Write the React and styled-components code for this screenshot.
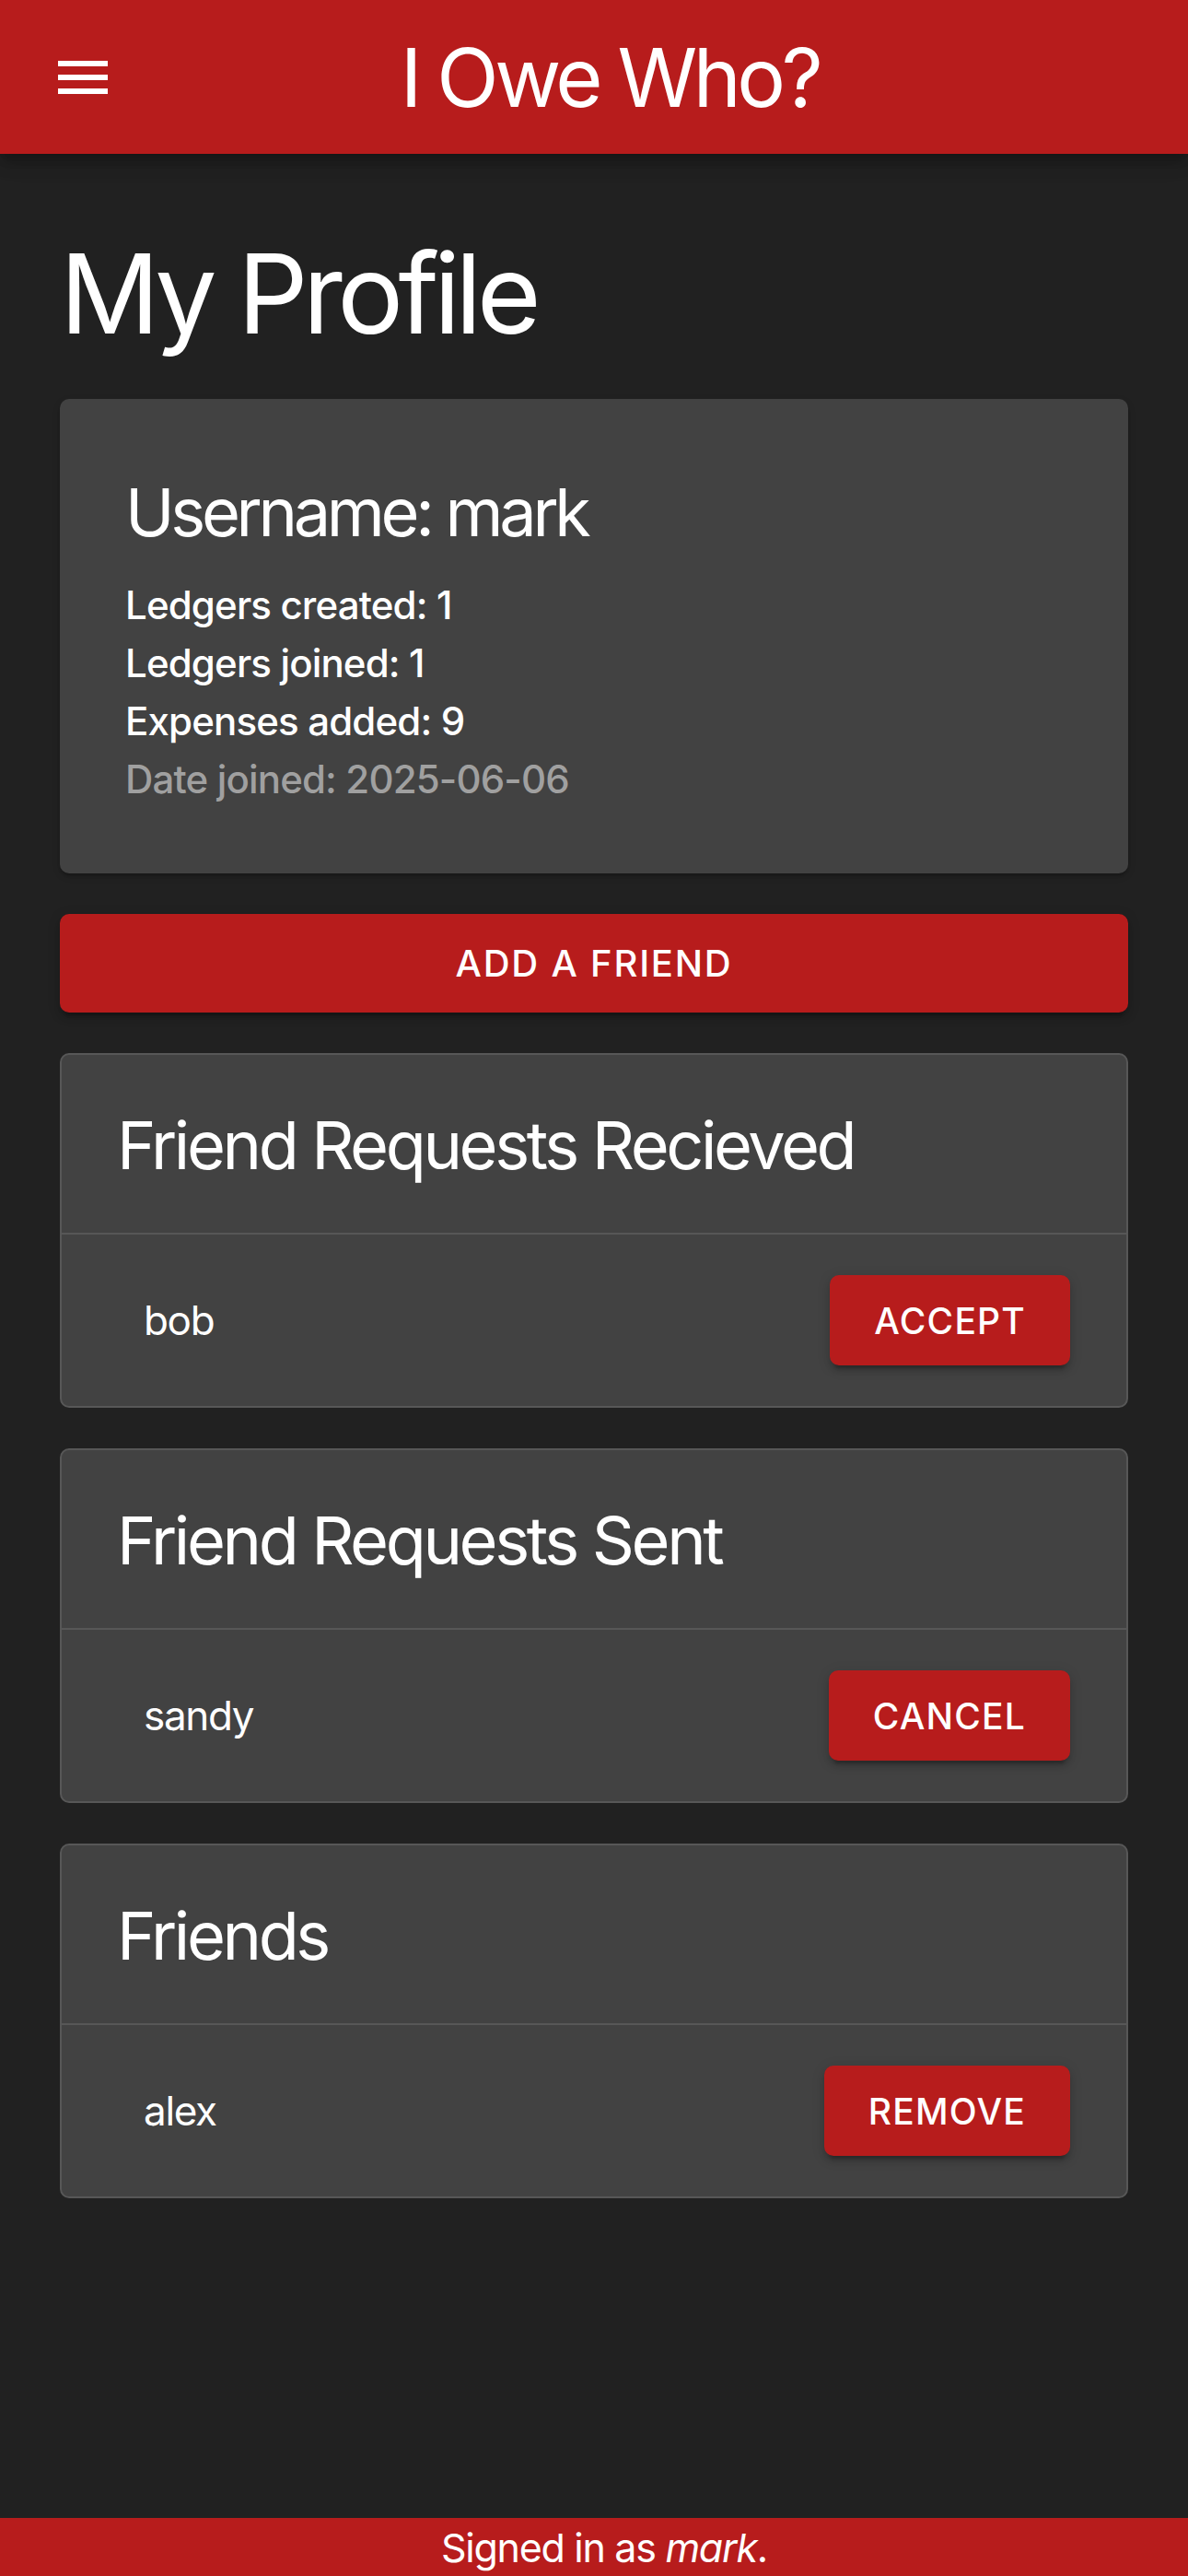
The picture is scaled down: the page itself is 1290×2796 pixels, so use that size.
import React from "react"
import styled, { createGlobalStyle } from "styled-components"

const GlobalStyle = createGlobalStyle`
  html, body {
    margin: 0;
    padding: 0;
    background: #212121;
  }
  body {
    font-family: "Inter", "Roboto", "Liberation Sans", sans-serif;
    color: #ffffff;
  }
  * {
    box-sizing: border-box;
  }
`

const Page = styled.div`
  min-height: 100vh;
  display: flex;
  flex-direction: column;
  background: #212121;
`

const AppBar = styled.header`
  height: 167px;
  flex-shrink: 0;
  display: flex;
  align-items: center;
  padding-left: 54px;
  background: #b71c1c;
  box-shadow: 0 6px 12px -3px rgba(0, 0, 0, 0.2), 0 12px 15px 0 rgba(0, 0, 0, 0.14),
    0 3px 30px 0 rgba(0, 0, 0, 0.12);
  position: relative;
  z-index: 1;
`

const MenuButton = styled.button`
  width: 72px;
  height: 72px;
  padding: 0;
  border: none;
  background: none;
  color: #fff;
  display: flex;
`

const AppTitle = styled.h1`
  flex: 1;
  margin: 0;
  padding-right: 92px;
  text-align: center;
  font-size: 88px;
  font-weight: 400;
  line-height: 1;
  letter-spacing: -0.05em;
`

const Main = styled.main`
  flex: 1;
  padding: 80px 65px 80px;
  display: flex;
  flex-direction: column;
  gap: 44px;
`

const PageTitle = styled.h2`
  margin: 0 0 -2px;
  font-size: 120px;
  font-weight: 400;
  line-height: 144px;
  letter-spacing: -0.048em;
`

const ProfileCard = styled.section`
  background: #424242;
  border-radius: 10px;
  padding: 75px 68px 71px 71px;
  box-shadow: 0 6px 3px -6px rgba(0, 0, 0, 0.2), 0 3px 3px 0 rgba(0, 0, 0, 0.14),
    0 3px 9px 0 rgba(0, 0, 0, 0.12);
`

const Username = styled.h3`
  margin: 0 0 21px;
  font-size: 72px;
  font-weight: 400;
  line-height: 96px;
  letter-spacing: -0.06em;
`

const Stat = styled.p`
  margin: 0;
  font-size: 42px;
  font-weight: 500;
  line-height: 63px;
  letter-spacing: -0.02em;
  color: ${({ muted }) => (muted ? "#a0a0a0" : "#ffffff")};
`

const Button = styled.button`
  display: flex;
  align-items: center;
  justify-content: center;
  border: none;
  border-radius: 10px;
  background: #b71c1c;
  color: #fff;
  font-family: inherit;
  font-weight: 500;
  text-transform: uppercase;
  box-shadow: 0 9px 3px -6px rgba(0, 0, 0, 0.2), 0 6px 6px 0 rgba(0, 0, 0, 0.14),
    0 3px 15px 0 rgba(0, 0, 0, 0.12);
  height: ${({ wide }) => (wide ? "107px" : "98px")};
  width: ${({ wide }) => (wide ? "100%" : "auto")};
  padding: 0 48px;
  font-size: ${({ wide }) => (wide ? "40px" : "39px")};
  letter-spacing: ${({ wide }) => (wide ? "1.8px" : "1.2px")};
`

const ListCard = styled.section`
  background: #424242;
  border: 2px solid #575757;
  border-radius: 10px;
`

const CardHeading = styled.h3`
  margin: 0;
  padding: 50px 56px 47px 60px;
  font-size: 72px;
  font-weight: 400;
  line-height: 96px;
  letter-spacing: -0.047em;
  border-bottom: 2px solid #575757;
`

const Row = styled.div`
  height: 186px;
  display: flex;
  align-items: center;
  justify-content: space-between;
  padding: 0 61px 0 89px;
`

const Name = styled.span`
  font-size: 44px;
  font-weight: 400;
  letter-spacing: -0.03em;
`

const Footer = styled.footer`
  height: 63px;
  flex-shrink: 0;
  display: flex;
  align-items: center;
  justify-content: center;
  padding-left: 22px;
  background: #b71c1c;
  font-size: 43px;
  letter-spacing: -0.03em;
`

const MenuIcon = () => (
  <svg width="72" height="72" viewBox="0 0 24 24" fill="currentColor">
    <path d="M3 18h18v-2H3v2zm0-5h18v-2H3v2zm0-7v2h18V6H3z" />
  </svg>
)

const FriendSection = ({ title, name, action }) => (
  <ListCard>
    <CardHeading>{title}</CardHeading>
    <Row>
      <Name>{name}</Name>
      <Button>{action}</Button>
    </Row>
  </ListCard>
)

export default function App() {
  return (
    <Page>
      <GlobalStyle />
      <AppBar>
        <MenuButton aria-label="menu">
          <MenuIcon />
        </MenuButton>
        <AppTitle>I Owe Who?</AppTitle>
      </AppBar>
      <Main>
        <PageTitle>My Profile</PageTitle>
        <ProfileCard>
          <Username>Username: mark</Username>
          <Stat>Ledgers created: 1</Stat>
          <Stat>Ledgers joined: 1</Stat>
          <Stat>Expenses added: 9</Stat>
          <Stat muted>Date joined: 2025-06-06</Stat>
        </ProfileCard>
        <Button wide>Add a friend</Button>
        <FriendSection title="Friend Requests Recieved" name="bob" action="Accept" />
        <FriendSection title="Friend Requests Sent" name="sandy" action="Cancel" />
        <FriendSection title="Friends" name="alex" action="Remove" />
      </Main>
      <Footer>
        <span>
          Signed in as <em>mark</em>.
        </span>
      </Footer>
    </Page>
  )
}
